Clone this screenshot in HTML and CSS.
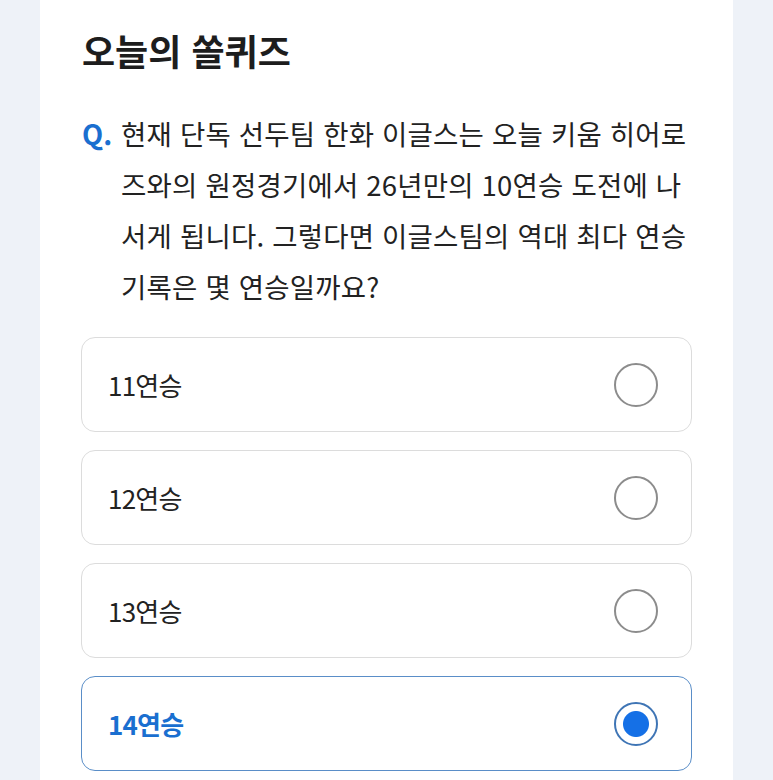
FILE: index.html
```html
<!DOCTYPE html>
<html lang="ko">
<head>
  <meta charset="UTF-8">
  <meta name="viewport" content="width=device-width, initial-scale=1.0">
  <title>오늘의 쏠퀴즈</title>
  <link rel="stylesheet" href="styles.css">
</head>
<body>
  <div class="card">
    <h1>오늘의 쏠퀴즈</h1>

    <div class="question">
      <span class="q-mark">Q.</span>
      <p>현재 단독 선두팀 한화 이글스는 오늘 키움 히어로<br>즈와의 원정경기에서 26년만의 10연승 도전에 나<br>서게 됩니다. 그렇다면 이글스팀의 역대 최다 연승<br>기록은 몇 연승일까요?</p>
    </div>

    <div class="options">
      <div class="option">
        <span>11연승</span>
        <span class="radio"></span>
      </div>
      <div class="option">
        <span>12연승</span>
        <span class="radio"></span>
      </div>
      <div class="option">
        <span>13연승</span>
        <span class="radio"></span>
      </div>
      <div class="option selected">
        <span>14연승</span>
        <span class="radio"></span>
      </div>
    </div>
  </div>
</body>
</html>
```

FILE: styles.css
```css
body { margin: 0; background-color: #eef2f8; font-family: "Noto Sans CJK KR", "Noto Sans", sans-serif; color: #222; }
.card { background-color: #fff; margin: 0 40px; padding: 30px 41px 40px 41px; min-height: 780px; box-sizing: border-box; }
h1 { font-size: 36px; line-height: 40px; font-weight: 700; margin: 0 0 38px 1px; color: #1d1d1d; }
.question { display: flex; font-size: 27.5px; line-height: 51px; padding-left: 1px; }
.q-mark { flex: 0 0 39px; color: #1a6fd0; font-weight: 700; }
.question p { margin: 0; letter-spacing: 0.2px; white-space: nowrap; }
.options { display: flex; flex-direction: column; gap: 18px; margin-top: 25px; }
.option { display: flex; align-items: center; justify-content: space-between; height: 95px; box-sizing: border-box; border: 1.5px solid #dcdcdc; border-radius: 14px; padding: 0 33px 0 26px; font-size: 26px; letter-spacing: -0.8px; }
.radio { width: 44px; height: 44px; box-sizing: border-box; border: 2px solid #8c8c8c; border-radius: 50%; }
.option.selected { border-color: #5a8ec8; color: #1a6fd0; font-weight: 600; }
.option.selected .radio { border-color: #3f75b5; background: radial-gradient(circle, #1570e6 0 12.5px, #fff 13.5px); }
```
